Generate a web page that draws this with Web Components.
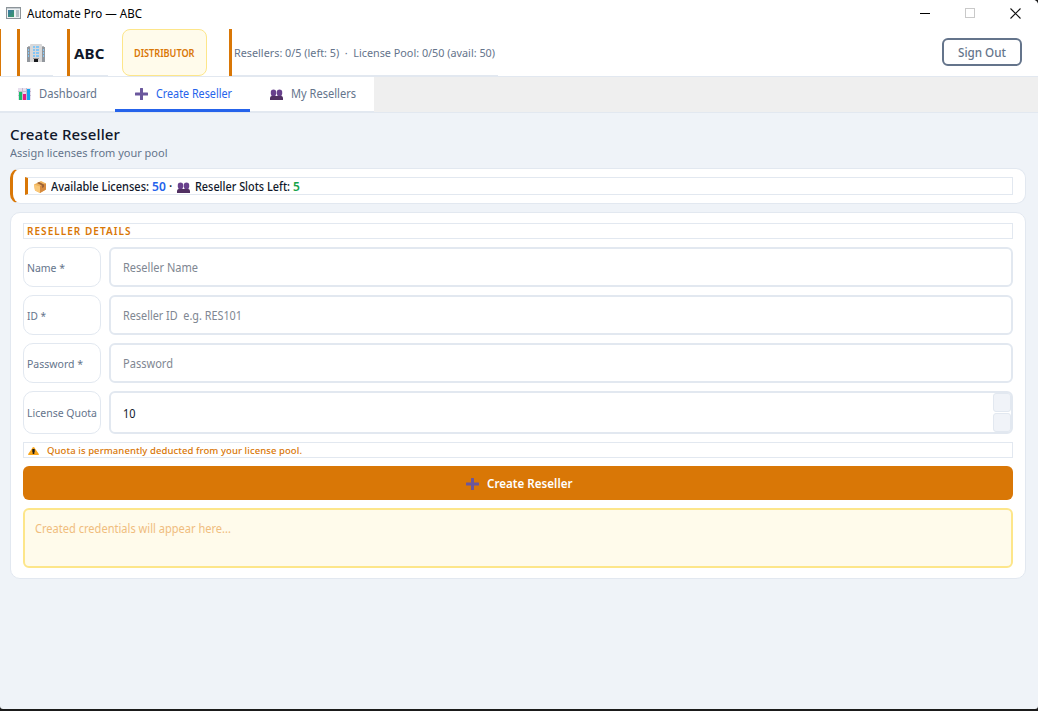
<!DOCTYPE html>
<html lang="en"><head><meta charset="utf-8"><title>Automate Pro — ABC</title>
<style>
html,body{margin:0;height:100%;overflow:hidden}
body{font:12px "Noto Sans","Open Sans",sans-serif;color:#0f172a;background:#1b1b1b;
--line:#e2e8f0;--amber:#d97706;--slate:#64748b;--bg:#eff3f8;--blue:#2563eb}
</style></head><body>
<app-window></app-window>
<script>
const icons={
app:`<svg width="15" height="12" viewBox="0 0 15 12"><path fill="#8c9499" d="M0 0h15v12H0z"/><path fill="#eef1f2" d="M1 1h13v10H1z"/><path fill="#c6cdd2" d="M1 1h13v1H1z"/><linearGradient id="g" x2="1" y2="1"><stop stop-color="#3777a8"/><stop offset="1" stop-color="#3a9a62"/></linearGradient><path fill="url(#g)" d="M2 3h6v7H2z"/><path fill="#b4c0c6" d="M10 3h3v7h-3z"/></svg>`,
building:`<svg width="20" height="18" viewBox="0 0 20 18"><path fill="#92979d" d="M1 3h3v15H1zM16 3h3v15h-3z"/><path fill="#b5b8bc" d="M2 2h2v1H2zM16 2h2v1h-2z"/><path fill="#d8d8d9" d="M4 1q0-1 1-1h10q1 0 1 1v17H4z"/><path fill="#83c6f5" d="M7 2h2v2H7zM10 2h3v2h-3zM7 5h2v2H7zM10 5h3v2h-3zM7 8h2v2H7zM10 8h3v2h-3zM7 11h2v2H7zM10 11h3v2h-3zM2 5h1v2H2zM2 8h1v2H2zM2 11h1v2H2zM17 5h1v2h-1zM17 8h1v2h-1zM17 11h1v2h-1z"/><path fill="#999" d="M7 14h6v1H7z"/><path fill="#17191d" d="M8 15h4v3H8z"/></svg>`,
chart:`<svg width="13" height="12" viewBox="0 0 13 12"><path fill="#e7dfee" d="M0 0h13v12H0z"/><path stroke="#c5bacd" d="M0 3.5h13M0 7.5h13M4.500 0v12M8.500 0v12" fill="none"/><path fill="#19bd68" d="M1 4h3v8H1z"/><path fill="#e31c83" d="M5 6h3v6H5z"/><path fill="#12a5ee" d="M9 1h3v11H9z"/></svg>`,
plus:`<svg width="13" height="12" viewBox="0 0 13 12"><path fill="#6a579d" d="M5 .5Q5 0 5.500 0h2q.5 0 .5.5V4.500h4.500q.5 0 .5.5v2q0 .5-.5.5H8v4q0 .5-.5.5h-2q-.5 0-.5-.5v-4H.5Q0 7.500 0 7V5q0-.5.5-.5H5z"/></svg>`,
people:`<svg width="13" height="11" viewBox="0 0 13 11"><path fill="#68408c" d="M.8 2.500Q1 .5 3.500.5T6.200 2.500V5L5.500 6.500v1.500H1.500V6.500L.8 5zM6.800 2.500Q7 .5 9.500.5T12.200 2.500V5l-.7 1.500v1.500H7.500V6.500L6.800 5z"/><path fill="#513062" d="M0 9q0-1.800 2-2h9q2 .2 2 2v2H0z"/></svg>`,
box:`<svg width="12" height="12" viewBox="0 0 12 12"><path fill="#efb35c" d="M0 3.500 7 0l5 2.500V8.500L6 12 1 9.500z"/><path fill="#d68a3e" d="m6 5 6-2.500v6L6 12z"/><path fill="#fac879" d="m0 3.500 6 2V12L1 9.500z"/><path fill="#9c6237" d="m3 2 2-1 5 2.500V6L8 7V4.500z"/></svg>`,
warn:`<svg width="11" height="8" viewBox="0 0 11 8"><path fill="#f9a61a" d="M4.700.5q.8-1 1.600 0L11 7.300l-.5.7H.5L0 7.300z"/><path fill="#1c1b19" d="M4.300 2h2.400v3.300H4.300zM4.700 5.300h1.600V7H4.700z"/></svg>`,
min:`<svg width="10" height="10"><path d="M0 5.500h10" stroke="#000"/></svg>`,
max:`<svg width="10" height="10"><rect x=".5" y=".5" width="9" height="9" fill="none" stroke="#c9c9c9"/></svg>`,
close:`<svg width="11" height="11"><path d="m.5.5 10 10m0-10-10 10" stroke="#111" stroke-width="1.100"/></svg>`
};
const define=(name,css,html,setup)=>customElements.define(name,class extends HTMLElement{
 connectedCallback(){
  if(this.shadowRoot)return;
  const t=document.createElement('template');
  t.innerHTML=`<style>*{box-sizing:border-box}:host{box-sizing:border-box;display:block}${css}</style>${html}`;
  this.attachShadow({mode:'open'}).append(t.content.cloneNode(true));
  if(setup)setup(this,this.shadowRoot);
 }});
/* Label fitted to its nominal width: condensed when too long, tracked when too short. */
define('ui-text',':host{display:inline-block;flex:none;white-space:pre;line-height:16px;text-align:left}span{display:inline-block;transform-origin:0 0}','<span><slot></slot></span>',(h,r)=>{
 const s=r.querySelector('span'),w=+h.getAttribute('w');
 if(!w)return;
 const n=[...h.textContent].length,cur=s.getBoundingClientRect().width;
 if(cur>w)s.style.transform=`scaleX(${(w/cur).toFixed(4)})`;
 else s.style.letterSpacing=((w-cur)/(n-.5)).toFixed(3)+'px';
 h.style.width=w+'px';
});
define('ui-icon',':host{display:inline-flex;flex:none}svg{display:block}','',(h,r)=>r.append(document.createRange().createContextualFragment(icons[h.getAttribute('name')])));
define('title-bar',`:host{display:flex;align-items:center;height:29px;padding:0 17px 3px 6px;background:#fff;color:#000}
 ui-text{margin:2px auto 0 6px}.w{display:flex;gap:35px;align-items:center}`,
 `<ui-icon name="app"></ui-icon><ui-text w="115">Automate Pro — ABC</ui-text><div class="w"><ui-icon name="min"></ui-icon><ui-icon name="max"></ui-icon><ui-icon name="close"></ui-icon></div>`);
define('app-header',`:host{display:flex;height:48px;background:#fff;border-bottom:1px solid var(--line)}
 .edge{width:1px;height:47px;background:var(--amber);margin-right:16px}
 .cell{display:flex;align-items:center;height:47px;border-left:3px solid var(--amber);background:linear-gradient(var(--line),var(--line)) bottom/100% 1px no-repeat}
 .a{width:36px;padding-left:6px;margin-right:14px;padding-top:1px}
 .b{width:41px;padding-left:4px;margin-right:14px;font-size:15px;font-weight:700}
 .badge{width:85px;height:47px;display:flex;align-items:center;justify-content:center;border:1px solid #fde68a;border-radius:8px;background:#fffbeb;color:var(--amber);font-size:10px;font-weight:600;margin-right:22px;padding-top:1px}
 .c{width:269px;padding-left:2px;color:var(--slate);font-size:11px;padding-top:1px}
 button{margin:9px 16px 0 auto;width:80px;height:28px;padding:1px 0 0;border:2px solid var(--slate);border-radius:6px;background:#fff;color:var(--slate);font:500 12px "Noto Sans",sans-serif}`,
 `<div class="edge"></div><div class="cell a"><ui-icon name="building"></ui-icon></div><div class="cell b"><ui-text w="30.500">ABC</ui-text></div><div class="badge"><ui-text w="60.500">DISTRIBUTOR</ui-text></div><div class="cell c"><ui-text w="261">Resellers: 0/5 (left: 5)  ·  License Pool: 0/50 (avail: 50)</ui-text></div><button><ui-text w="48">Sign Out</ui-text></button>`);
define('nav-tab',`:host{display:flex;align-items:center;height:35px;background:#fff;color:var(--slate);border-bottom:1px solid var(--line)}
 :host([active]){color:var(--blue);border-bottom:3px solid var(--blue);padding-top:1px}
 slot{display:contents}`,`<slot name="icon"></slot><slot></slot>`);
define('nav-tabs',`:host{display:flex;height:36px;background:#efefef;border-bottom:1px solid var(--line)}
 ui-icon{margin-top:1px}ui-text{margin-left:8px}`,
 `<nav-tab style="width:115px;padding-left:18px"><ui-icon name="chart" slot="icon" style="margin-top:0"></ui-icon><ui-text w="58">Dashboard</ui-text></nav-tab><nav-tab active style="width:135px;padding-left:20px"><ui-icon name="plus" slot="icon"></ui-icon><ui-text w="76">Create Reseller</ui-text></nav-tab><nav-tab style="width:124px;padding-left:20px"><ui-icon name="people" slot="icon"></ui-icon><ui-text w="65">My Resellers</ui-text></nav-tab>`);
define('quota-summary',`:host{background:#fff;height:36px;border:1px solid var(--line);border-left:3px solid var(--amber);border-radius:10px;padding:8px 12px}
 .in{display:flex;align-items:center;height:18px;border:1px solid var(--line);border-left:3px solid var(--amber);padding:1px 0 0 6px;font-weight:500}`,
 `<div class="in"><ui-icon name="box"></ui-icon><ui-text w="98" style="margin-left:5px">Available Licenses:</ui-text><ui-text w="14" style="margin-left:3px;color:#2563eb;font-weight:600">50</ui-text><ui-text style="margin-left:3px;width:8px">·</ui-text><ui-icon name="people" style="margin-top:1px"></ui-icon><ui-text w="95" style="margin-left:5px">Reseller Slots Left:</ui-text><ui-text w="7" style="margin-left:3px;color:#16a34a;font-weight:600">5</ui-text></div>`);
define('form-row',`:host{display:flex;gap:8px;height:40px}:host([tall]){height:43px}
 .l,.f{display:flex;align-items:center}
 .l{width:78px;border:1px solid var(--line);border-radius:10px;padding:2px 0 0 3px;color:var(--slate);font-size:11px}
 :host([tall]) .l{padding-top:1px}
 .f{flex:1;border:2px solid var(--line);border-radius:6px;padding:1px 0 0 12px;color:#808792}
 :host([tall]) .f{color:#0f172a;padding-top:0}:host([tall]) ::slotted([slot=f]){padding-top:2px}
 .s{margin-left:auto;display:flex;flex-direction:column;gap:1px}.s i{width:18px;height:19px;border:1px solid var(--line);border-radius:3px;background:#f0f3f8}`,
 `<div class="l"><slot name="l"></slot></div><div class="f"><slot name="f"></slot></div>`,
 (h,r)=>{if(h.hasAttribute('tall'))r.querySelector('.f').insertAdjacentHTML('beforeend','<div class="s"><i></i><i></i></div>')});
define('reseller-form',`:host{display:flex;flex-direction:column;gap:8px;background:#fff;border:1px solid var(--line);border-radius:10px;padding:10px 12px}
 .strip{height:16px;border:1px solid var(--line);padding-left:3px;display:flex;align-items:center;color:var(--amber);font-size:9.500px}
 .h{font-weight:600;font-size:10px}
 button{display:flex;align-items:center;justify-content:center;height:34px;border:0;border-radius:6px;background:var(--amber);color:#fff;font:600 12px "Noto Sans",sans-serif;padding:2px 0 0 2px;gap:8px}
 .out{height:60px;border:2px solid #fde68a;border-radius:6px;background:#fffbeb;color:#f0bd7e;padding:10px}`,
 `<div class="strip h"><ui-text w="104">RESELLER DETAILS</ui-text></div>
 <form-row><ui-text slot="l" w="38">Name *</ui-text><ui-text slot="f" w="75">Reseller Name</ui-text></form-row>
 <form-row><ui-text slot="l" w="19">ID *</ui-text><ui-text slot="f" w="119">Reseller ID  e.g. RES101</ui-text></form-row>
 <form-row><ui-text slot="l" w="56">Password *</ui-text><ui-text slot="f" w="50">Password</ui-text></form-row>
 <form-row tall><ui-text slot="l" w="70">License Quota</ui-text><ui-text slot="f" w="12.500">10</ui-text></form-row>
 <div class="strip"><ui-icon name="warn" style="margin:2px 0 0 1px"></ui-icon><ui-text w="255" style="margin:2px 0 0 8px;font-weight:500">Quota is permanently deducted from your license pool.</ui-text></div>
 <button><ui-icon name="plus"></ui-icon><ui-text w="85.500">Create Reseller</ui-text></button>
 <div class="out"><ui-text w="196">Created credentials will appear here...</ui-text></div>`);
define('app-window',`:host{display:flex;flex-direction:column;height:709px;background:var(--bg);border-radius:0 5px 3px 3px;overflow:hidden}
 main{display:flex;flex-direction:column;padding:13px 12px 0 10px}
 h1{margin:0;font-size:15px;font-weight:500;height:20px;line-height:18px;display:flex}
 .sub{height:14px;color:var(--slate);font-size:11px;display:flex;align-items:center;margin-bottom:8px}
 quota-summary{margin-bottom:8px}`,
 `<title-bar></title-bar><app-header></app-header><nav-tabs></nav-tabs><main><h1><ui-text w="110">Create Reseller</ui-text></h1><div class="sub"><ui-text w="157.500">Assign licenses from your pool</ui-text></div><quota-summary></quota-summary><reseller-form></reseller-form></main>`);
</script></body></html>
